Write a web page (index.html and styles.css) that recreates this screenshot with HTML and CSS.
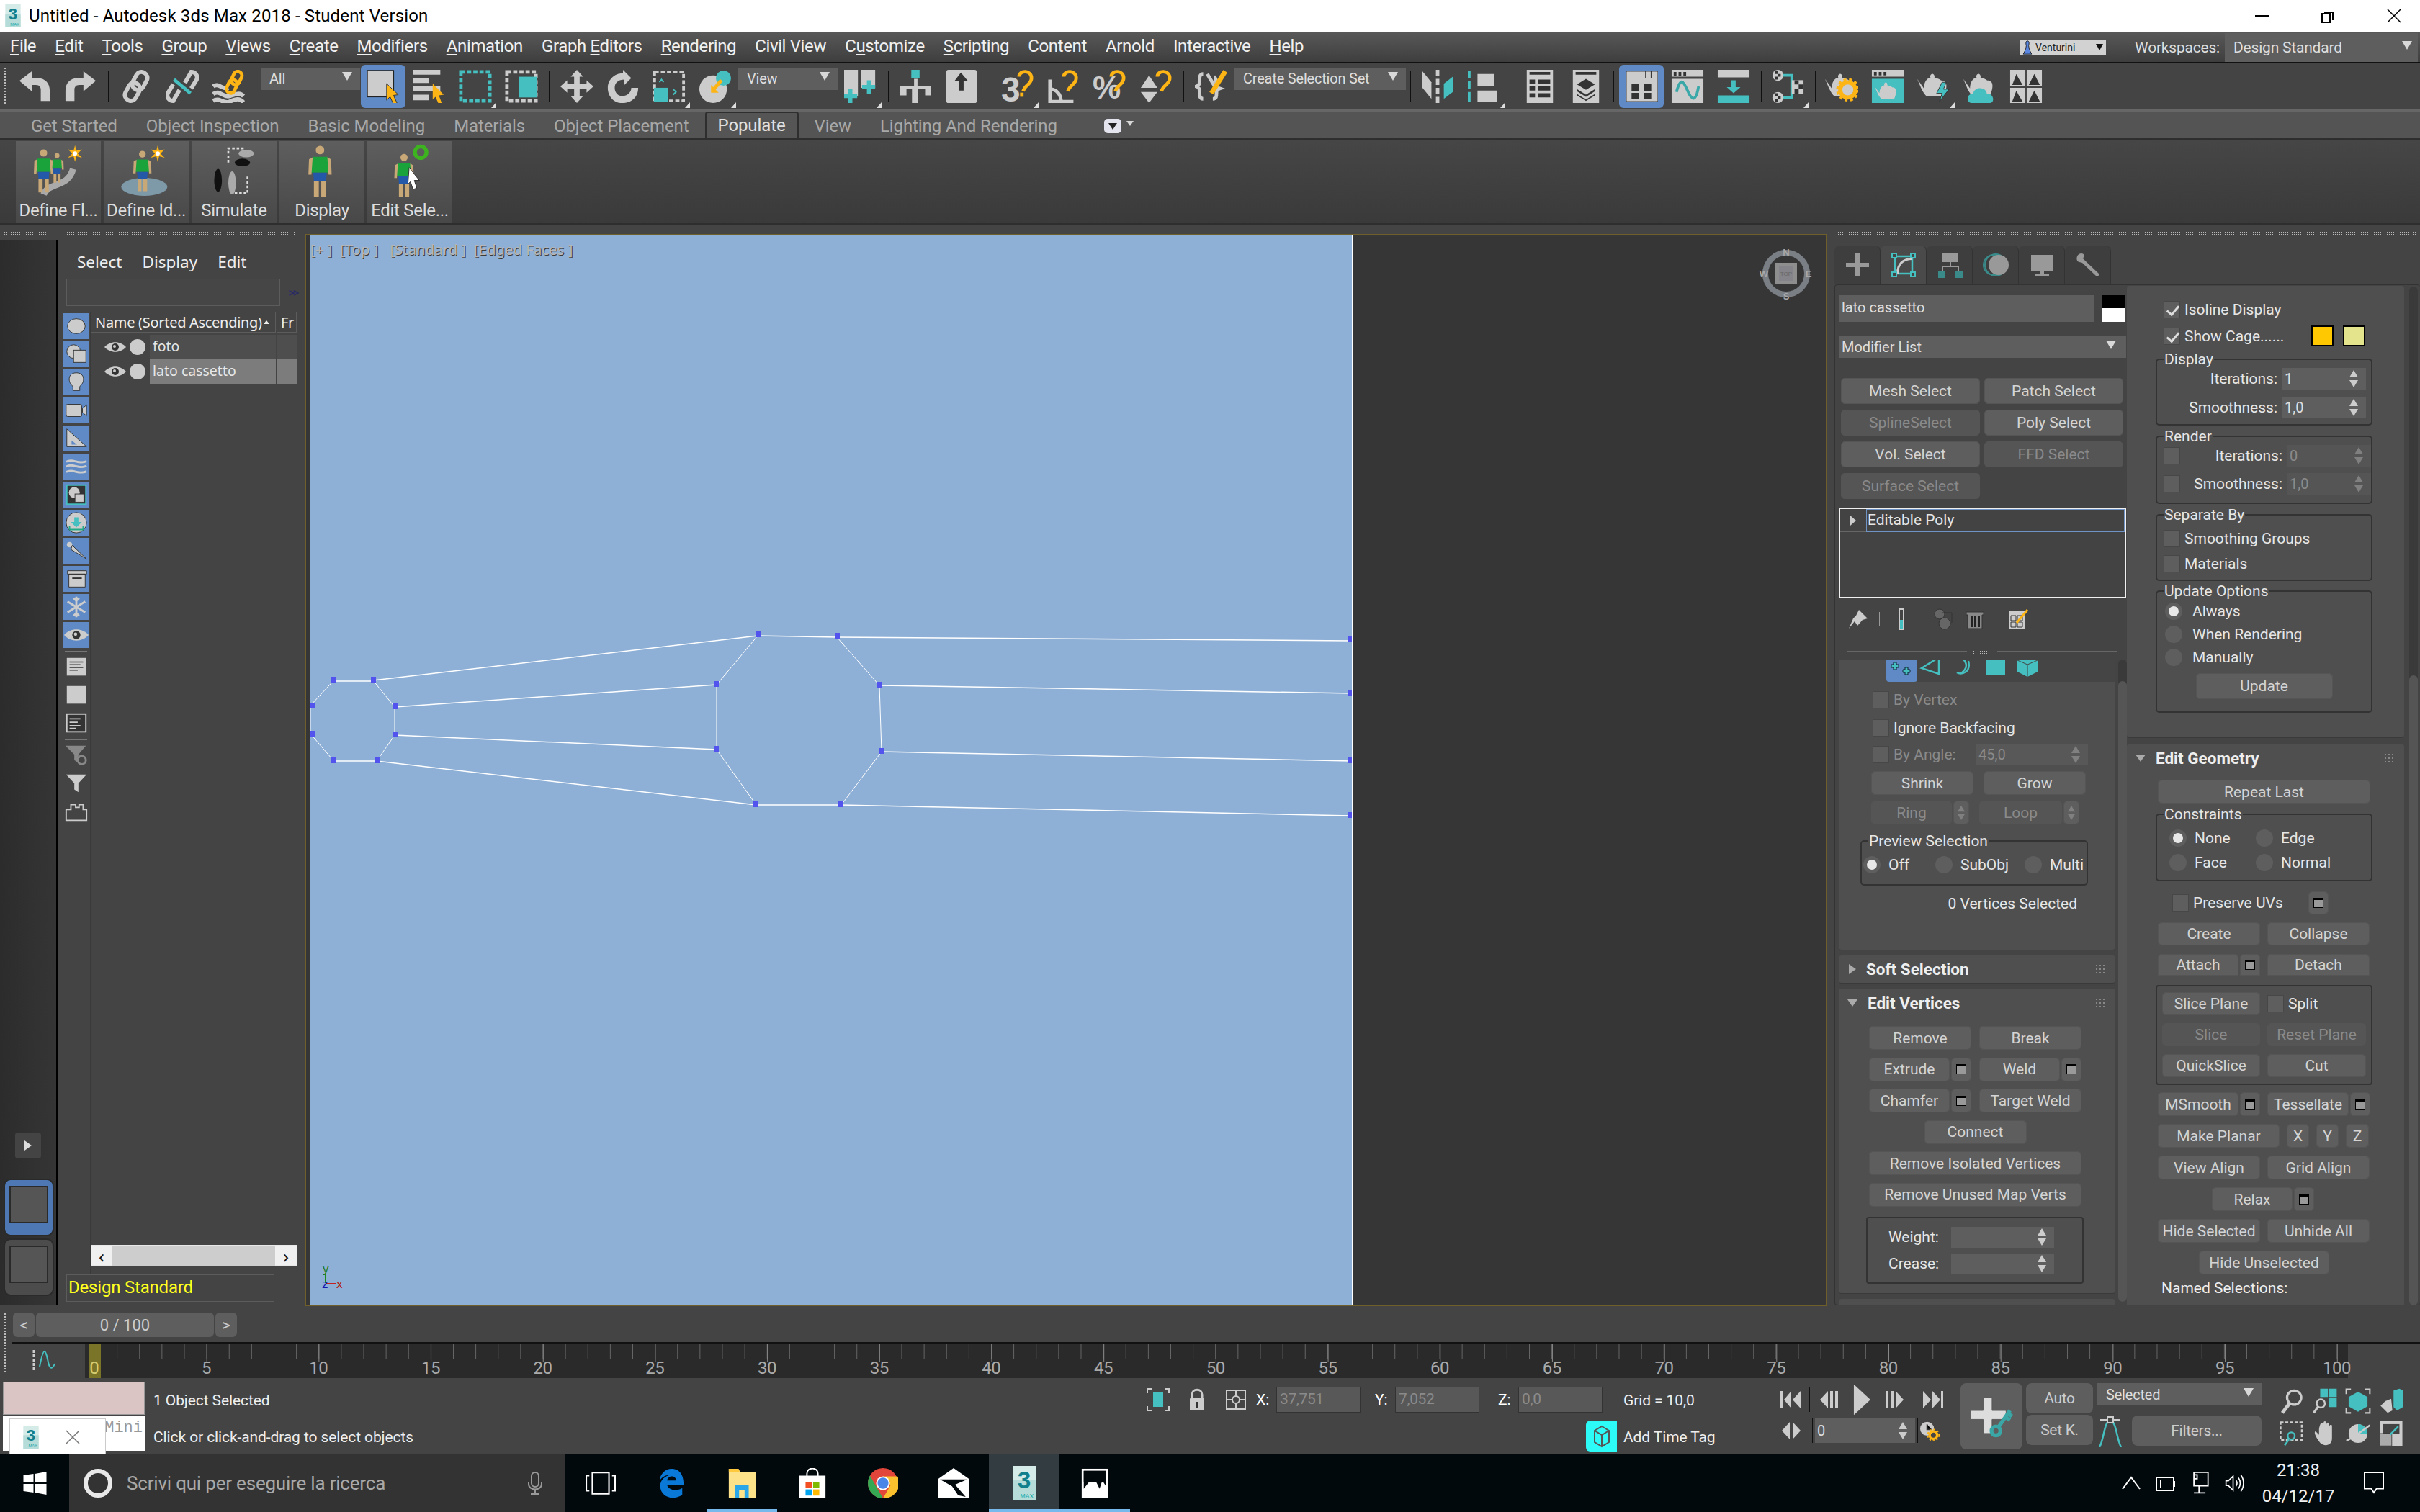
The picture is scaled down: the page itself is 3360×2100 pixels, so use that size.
FILE: index.html
```html
<!DOCTYPE html>
<html lang="en">
<head>
<meta charset="utf-8">
<title>Untitled - Autodesk 3ds Max 2018 - Student Version</title>
<link rel="stylesheet" href="styles.css">
</head>
<body>
<svg class="defs" width="0" height="0">
  <defs>
    <symbol id="maxlogo" viewBox="0 0 48 72">
      <rect width="48" height="72" fill="#d5ebe8"/><rect y="30" width="48" height="42" fill="#b5dcd8"/>
      <text x="24" y="47" text-anchor="middle" font-family="Liberation Sans" font-weight="700" font-size="50" fill="#12808c">3</text>
      <text x="30" y="67" text-anchor="middle" font-family="Liberation Sans" font-size="13" fill="#21a8a8">MAX</text>
    </symbol>
    <symbol id="i-undo" viewBox="0 0 48 48"><path fill="#ccc" d="M2 16 20 2v10h8c12 0 18 8 18 18v15H33V29c0-4-2-7-7-7h-6v9z"/></symbol>
    <symbol id="i-redo" viewBox="0 0 48 48"><path fill="#ccc" d="M46 16 28 2v10h-8C8 12 2 20 2 30v15h13V29c0-4 2-7 7-7h6v9z"/></symbol>
    <symbol id="i-link" viewBox="0 0 48 48"><g fill="none" stroke="#ccc" stroke-width="6"><rect x="21" y="3" width="17" height="27" rx="8" transform="rotate(28 30 16)"/><rect x="10" y="18" width="17" height="27" rx="8" transform="rotate(28 18 32)"/></g></symbol>
    <symbol id="i-unlink" viewBox="0 0 48 48"><g fill="none" stroke="#ccc" stroke-width="6"><path d="M28 19 37 3c6 0 10 5 8 11l-8 13"/><path d="M20 29 11 45C5 45 1 40 3 34l8-13"/></g><path stroke="#45bfbf" stroke-width="5" d="M12 14 36 34"/></symbol>
    <symbol id="i-bind" viewBox="0 0 48 48"><g fill="none" stroke="#ccc" stroke-width="6"><path d="M2 24c8-6 14 6 22 2"/><path d="M2 35c10-7 14 6 24 3s14-6 20 0"/><path d="M2 45c10-6 14 5 24 1s14-5 20 1"/></g><g fill="none" stroke="#fdb415" stroke-width="5"><rect x="30" y="2" width="12" height="20" rx="6" transform="rotate(25 36 12)"/><rect x="23" y="14" width="12" height="20" rx="6" transform="rotate(25 29 24)"/></g></symbol>
    <symbol id="i-sel" viewBox="0 0 48 48"><rect x="1" y="1" width="38" height="38" fill="#ccc" stroke="#222" stroke-width="1.5"/><path fill="#fdb415" stroke="#333" d="M29 20 46 36 39 37 44 48 39 50 34 39 29 44z"/></symbol>
    <symbol id="i-selname" viewBox="0 0 48 48"><path fill="#ccc" d="M0 0h40v7H0zM0 12h24v7H0zM0 24h40v7H0zM0 36h24v8H0z"/><path fill="#fdb415" d="M29 20 45 36 38 37 42 48 37 48 33 39 29 43z"/></symbol>
    <symbol id="i-rect" viewBox="0 0 48 48"><rect x="3" y="3" width="42" height="42" fill="none" stroke="#45bfbf" stroke-width="5" stroke-dasharray="6 3"/></symbol>
    <symbol id="i-window" viewBox="0 0 48 48"><rect x="3" y="3" width="42" height="42" fill="none" stroke="#ccc" stroke-width="5" stroke-dasharray="6 3"/><rect x="20" y="10" width="26" height="30" fill="#45bfbf"/></symbol>
    <symbol id="i-move" viewBox="0 0 48 48"><path fill="#ccc" d="M24 0 33 10H28V20H38V15L48 24 38 33V28H28V38H33L24 48 15 38H20V28H10V33L0 24 10 15V20H20V10H15z"/></symbol>
    <symbol id="i-rotate" viewBox="0 0 48 48"><path fill="#ccc" d="M24 0 36 12 26 22V14C18 14 12 18 12 26s6 12 11 12 13-4 13-12h10c0 14-10 22-23 22S2 38 2 26 12 5 24 5z"/></symbol>
    <symbol id="i-scale" viewBox="0 0 48 48"><rect x="3" y="3" width="42" height="42" fill="none" stroke="#ccc" stroke-width="4" stroke-dasharray="6 3"/><rect x="2" y="26" width="20" height="20" fill="#45bfbf"/><path fill="none" stroke="#45bfbf" stroke-width="2" d="M10 18l3-4 3 4M30 28l4 4-4 4"/></symbol>
    <symbol id="i-place" viewBox="0 0 48 48"><ellipse cx="21" cy="28" rx="20" ry="20" fill="#ccc"/><circle cx="36" cy="12" r="11" fill="#45bfbf"/><path stroke="#fdb415" stroke-width="5" d="M33 15 22 28"/><path fill="#fdb415" d="M18 22v11h11z"/></symbol>
    <symbol id="i-addin" viewBox="0 0 48 48"><path fill="#ccc" d="M0 0h20v38H0zM25 0h20v26H25z"/><path fill="#45bfbf" d="M6 28h6v7h7v6h-7v7H6v-7H-1v-6h7zM33 15h6v7h6v6h-6v7h-6v-7h-7v-6h7z"/></symbol>
    <symbol id="i-manip" viewBox="0 0 48 48"><path fill="#45bfbf" d="M17 0h12v12H17z"/><path fill="#ccc" d="M21 13h5v10h19v14H37v-9H27v20H18V28H10v9H1V23h20z"/></symbol>
    <symbol id="i-kbd" viewBox="0 0 48 48"><rect x="1" y="0" width="44" height="48" rx="3" fill="#ccc"/><path fill="#333" d="M22 4l10 12h-6v14h-7V16h-6z"/></symbol>
    <symbol id="i-s3" viewBox="0 0 48 48"><text x="0" y="46" font-family="Liberation Sans" font-weight="700" font-size="50" fill="#ccc">3</text><path fill="none" stroke="#fdb415" stroke-width="5" d="M26 10c0-10 18-10 18 2 0 9-10 10-12 19"/><path stroke="#fdb415" stroke-width="5" d="M30 33v6"/></symbol>
    <symbol id="i-ang" viewBox="0 0 48 48"><path fill="none" stroke="#ccc" stroke-width="5" d="M4 14V46H38M4 28C14 28 20 36 20 46"/><path fill="none" stroke="#fdb415" stroke-width="5" d="M24 10c0-10 18-10 18 2 0 9-10 10-12 19"/></symbol>
    <symbol id="i-pct" viewBox="0 0 48 48"><text x="-1" y="42" font-family="Liberation Sans" font-weight="700" font-size="46" fill="#ccc">%</text><path fill="none" stroke="#fdb415" stroke-width="5" d="M26 10c0-10 18-10 18 2 0 9-10 10-12 19"/></symbol>
    <symbol id="i-spin" viewBox="0 0 48 48"><path fill="#ccc" d="M14 8 26 26H2zM2 32H26L14 48z"/><path fill="none" stroke="#fdb415" stroke-width="5" d="M26 10c0-10 18-10 18 2 0 9-10 10-12 19"/></symbol>
    <symbol id="i-editsel" viewBox="0 0 48 48"><g fill="none" stroke="#ccc" stroke-width="5"><path d="M12 6C4 6 8 18 6 21c-1 2-4 3-4 3s3 1 4 3c2 3-2 15 6 15M28 10c4 2 2 12 4 14 1 2 4 3 4 3s-3 1-4 3c-2 3 2 12-6 12"/></g><path stroke="#ccc" stroke-width="5" d="M18 6 30 26"/><path stroke="#fdb415" stroke-width="7" d="M44 2 24 34"/></symbol>
    <symbol id="i-mirror" viewBox="0 0 48 48"><path fill="#ccc" d="M1 2 14 18V42L1 26z"/><path stroke="#ccc" stroke-width="5" stroke-dasharray="9 4" d="M23 0V48"/><path fill="#45bfbf" d="M45 10V32L32 42V20z"/></symbol>
    <symbol id="i-align" viewBox="0 0 48 48"><path fill="#45bfbf" d="M0 2h4v10H0zM0 16h4v12H0zM0 32h4v14H0z"/><path fill="#ccc" d="M14 6H38V24H14zM14 30H42V46H14z"/></symbol>
    <symbol id="i-layer" viewBox="0 0 48 48"><rect x="5" width="38" height="48" fill="#ccc"/><path fill="#333" d="M9 3h30v4H9zM9 14h8v6H9zM21 14h18v6H21zM9 24h8v6H9zM21 24h18v6H21zM9 34h8v6H9zM21 34h18v6H21z"/></symbol>
    <symbol id="i-stack" viewBox="0 0 48 48"><rect x="5" width="38" height="48" fill="#ccc"/><path fill="#333" d="M9 3h30v4H9zM24 13 37 21 24 29 11 21zM11 28 24 36 37 28 37 31 24 39 11 31zM11 35l13 8 13-8v2L24 45 11 37z"/></symbol>
    <symbol id="i-grid" viewBox="0 0 48 48"><path fill="#ccc" stroke="#222" d="M2 2h46v44H2z"/><path fill="none" stroke="#222" d="M30 2v10h18M38 2v10"/><path fill="#333" d="M16 20h11v11H16zM36 20h11v11H36zM16 34h11v10H16zM36 34h11v10H36z" transform="translate(-5 2) scale(.92)"/></symbol>
    <symbol id="i-curve" viewBox="0 0 48 48"><path fill="#ccc" d="M1 0h46v10H1zM1 13h46v35H1z"/><path fill="#333" d="M4 3h4v6H4zM11 3h4v6h-4zM18 3h4v6h-4z"/><path fill="none" stroke="#3aa8a8" stroke-width="4" d="M8 32c6-22 10-16 16-2s12 18 16-6"/></symbol>
    <symbol id="i-scene" viewBox="0 0 48 48"><path fill="#ccc" d="M1 0h46v11H1z"/><path fill="#45bfbf" d="M1 37h46v11H1zM20 15h7v10h7L24 34 14 25h6z"/></symbol>
    <symbol id="i-schem" viewBox="0 0 48 48"><path fill="none" stroke="#45bfbf" stroke-width="4" d="M16 8H30V40H16"/><g fill="#ccc"><ellipse cx="10" cy="8" rx="8" ry="8"/><ellipse cx="10" cy="40" rx="8" ry="8"/><rect x="30" y="15" width="17" height="20"/></g><g fill="#333"><path d="M6 2h4v4H6zM10 6h4v4h-4zM6 10h4v4H6zM6 34h4v4H6zM10 38h4v4h-4zM6 42h4v4H6zM34 15h6v6h-6zM40 21h7v7h-7zM34 28h6v7h-6z"/></g></symbol>
    <symbol id="teapot" viewBox="0 0 48 48"><path fill="#ccc" d="M0 14 10 28c0-8 4-16 10-16 0 0-2-5 3-6 4 1 3 6 3 6 5 1 8 2 10 4 10 0 10 10 4 24H14C10 36 8 32 6 28z"/></symbol>
    <symbol id="i-rsetup" viewBox="0 0 48 48"><use href="#teapot" width="46" height="46"/><circle cx="33" cy="29" r="11" fill="none" stroke="#fdb415" stroke-width="6"/><circle cx="33" cy="29" r="15" fill="none" stroke="#fdb415" stroke-width="4" stroke-dasharray="4 4"/></symbol>
    <symbol id="i-rframe" viewBox="0 0 48 48"><path fill="#ccc" d="M1 0h46v10H1z"/><path fill="#333" d="M4 3h4v5H4zM11 3h4v5h-4zM18 3h4v5h-4z"/><rect x="1" y="13" width="46" height="35" fill="#45bfbf"/><use href="#teapot" x="4" y="14" width="36" height="34"/></symbol>
    <symbol id="i-rprod" viewBox="0 0 48 48"><use href="#teapot" width="46" height="46"/><path fill="#45bfbf" stroke="#333" d="M36 18 28 34H36L32 46 46 28H38L42 18z"/></symbol>
    <symbol id="i-cloud" viewBox="0 0 48 48"><use href="#teapot" width="46" height="46"/><path fill="#45bfbf" d="M12 48c-8 0-8-14 2-13 2-12 20-10 20 0 10-2 12 13 5 13z"/></symbol>
    <symbol id="i-gallery" viewBox="0 0 48 48"><path fill="#ccc" d="M1 0H23V24H1zM25 0H47V24H25zM1 26H23V48H1zM25 26H47V48H25z"/><path fill="#333" d="M4 22 10 6 13 12 19 22zM28 22 36 6 44 22zM4 46 10 30 13 36 19 46zM28 46 36 30 44 46z"/></symbol>
    <symbol id="person" viewBox="0 0 40 90"><circle cx="20" cy="9" r="7" fill="#c9a878"/><path fill="#1aa33a" d="M8 20h24l3 26H5z"/><path fill="#2458a8" d="M9 46h22l-1 14H10z"/><path fill="#c9a878" d="M10 60h8v26h-8zM22 60h8v26h-8zM2 24l6-3-2 28H1zM38 24l-6-3 2 28h5z"/></symbol>
    <symbol id="star" viewBox="0 0 24 24"><path fill="#fdb415" d="M12 0l2 8 8-2-6 6 6 6-8-2-2 8-2-8-8 2 6-6-6-6 8 2z"/><circle cx="12" cy="12" r="3" fill="#fff"/></symbol>
    <symbol id="eye" viewBox="0 0 30 16"><path fill="#ccc" d="M0 8C8-1 22-1 30 8 22 17 8 17 0 8z"/><circle cx="15" cy="8" r="5" fill="#333"/><circle cx="14" cy="7" r="2" fill="#ccc"/></symbol>
    <symbol id="updown" viewBox="0 0 12 24"><path fill="#ccc" d="M6 0 12 10H0zM0 14H12L6 24z"/></symbol>
    <symbol id="updowndim" viewBox="0 0 12 24"><path fill="#808080" d="M6 0 12 10H0zM0 14H12L6 24z"/></symbol>
    <symbol id="dotgrip" viewBox="0 0 12 12"><path fill="#888" d="M0 0h2v2H0zM5 0h2v2H5zM10 0h2v2h-2zM0 5h2v2H0zM5 5h2v2H5zM10 5h2v2h-2zM0 10h2v2H0zM5 10h2v2H5zM10 10h2v2h-2z"/></symbol>
  </defs>
</svg>

<header class="titlebar">
  <svg class="tlogo"><use href="#maxlogo"/></svg>
  <span class="ttext">Untitled - Autodesk 3ds Max 2018 - Student Version</span>
  <div class="winbtns">
    <svg class="wb" viewBox="0 0 20 20"><path stroke="#000" stroke-width="2" d="M1 10H20"/></svg>
    <svg class="wb" viewBox="0 0 20 20"><path fill="none" stroke="#000" stroke-width="2" d="M5 5h12V16M2 7h11v12H2z"/></svg>
    <svg class="wb" viewBox="0 0 20 20"><path stroke="#000" stroke-width="1.5" d="M1 1 19 19M19 1 1 19"/></svg>
  </div>
</header>

<nav class="menubar">
  <span><u>F</u>ile</span><span><u>E</u>dit</span><span><u>T</u>ools</span><span><u>G</u>roup</span><span><u>V</u>iews</span><span><u>C</u>reate</span><span><u>M</u>odifiers</span><span><u>A</u>nimation</span><span>Graph <u>E</u>ditors</span><span><u>R</u>endering</span><span>Civil View</span><span>C<u>u</u>stomize</span><span><u>S</u>cripting</span><span>Content</span><span>Arnold</span><span>Interactive</span><span><u>H</u>elp</span>
  <div class="menuright">
    <div class="user"><svg class="usericon" viewBox="0 0 16 24"><path fill="#5a86e0" stroke="#111" d="M8 1c3 0 3 4 2 8l1 6 4 8H1l4-8 1-6C5 5 5 1 8 1z"/></svg><span>Venturini</span><i class="tri-dark"></i></div>
    <span class="wslabel">Workspaces:</span>
    <div class="wsdrop"><span>Design Standard</span><i class="tri"></i></div>
  </div>
</nav>

<section class="toolbar">
  <div class="vgrip"></div>
  <div class="ti"><svg><use href="#i-undo"/></svg></div>
  <div class="ti"><svg><use href="#i-redo"/></svg></div>
  <div class="sep"></div>
  <div class="ti"><svg><use href="#i-link"/></svg></div>
  <div class="ti"><svg><use href="#i-unlink"/></svg></div>
  <div class="ti"><svg><use href="#i-bind"/></svg></div>
  <div class="sep"></div>
  <div class="tdrop w138"><span>All</span><i class="tri"></i></div>
  <div class="ti on"><svg><use href="#i-sel"/></svg></div>
  <div class="ti"><svg><use href="#i-selname"/></svg></div>
  <div class="ti fly"><svg><use href="#i-rect"/></svg></div>
  <div class="ti"><svg><use href="#i-window"/></svg></div>
  <div class="sep"></div>
  <div class="ti"><svg><use href="#i-move"/></svg></div>
  <div class="ti"><svg><use href="#i-rotate"/></svg></div>
  <div class="ti fly"><svg><use href="#i-scale"/></svg></div>
  <div class="ti fly"><svg><use href="#i-place"/></svg></div>
  <div class="tdrop w138"><span>View</span><i class="tri"></i></div>
  <div class="ti fly"><svg><use href="#i-addin"/></svg></div>
  <div class="sep"></div>
  <div class="ti"><svg><use href="#i-manip"/></svg></div>
  <div class="ti"><svg><use href="#i-kbd"/></svg></div>
  <div class="sep"></div>
  <div class="ti fly"><svg><use href="#i-s3"/></svg></div>
  <div class="ti"><svg><use href="#i-ang"/></svg></div>
  <div class="ti"><svg><use href="#i-pct"/></svg></div>
  <div class="ti"><svg><use href="#i-spin"/></svg></div>
  <div class="sep"></div>
  <div class="ti"><svg><use href="#i-editsel"/></svg></div>
  <div class="tdrop w238"><span>Create Selection Set</span><i class="tri"></i></div>
  <div class="sep"></div>
  <div class="ti"><svg><use href="#i-mirror"/></svg></div>
  <div class="ti fly"><svg><use href="#i-align"/></svg></div>
  <div class="sep"></div>
  <div class="ti"><svg><use href="#i-layer"/></svg></div>
  <div class="ti"><svg><use href="#i-stack"/></svg></div>
  <div class="sep"></div>
  <div class="ti on"><svg><use href="#i-grid"/></svg></div>
  <div class="ti"><svg><use href="#i-curve"/></svg></div>
  <div class="ti"><svg><use href="#i-scene"/></svg></div>
  <div class="sep nar"></div>
  <div class="ti fly"><svg><use href="#i-schem"/></svg></div>
  <div class="sep nar"></div>
  <div class="ti"><svg><use href="#i-rsetup"/></svg></div>
  <div class="ti"><svg><use href="#i-rframe"/></svg></div>
  <div class="ti fly"><svg><use href="#i-rprod"/></svg></div>
  <div class="ti"><svg><use href="#i-cloud"/></svg></div>
  <div class="ti"><svg><use href="#i-gallery"/></svg></div>
</section>

<section class="tabs">
  <span class="tab">Get Started</span><span class="tab">Object Inspection</span><span class="tab">Basic Modeling</span><span class="tab">Materials</span><span class="tab">Object Placement</span><span class="tab active">Populate</span><span class="tab">View</span><span class="tab">Lighting And Rendering</span>
  <div class="tabmenu"><svg viewBox="0 0 26 22"><rect x="1" y="1" width="24" height="20" rx="5" fill="#e4e4ee"/><path fill="#222" d="M7 7H19L13 16z"/></svg><i class="tri small"></i></div>
</section>

<section class="ribbon">
  <div class="rb"><svg class="rbi" viewBox="0 0 90 90"><path fill="none" stroke="#aaa" stroke-width="10" d="M22 80C30 60 60 70 68 40"/><use href="#person" x="6" y="8" width="32" height="72"/><use href="#person" x="32" y="14" width="22" height="50"/><use href="#star" x="58" y="2" width="26" height="28"/></svg><span>Define Fl...</span></div>
  <div class="rb"><svg class="rbi" viewBox="0 0 90 90"><ellipse cx="42" cy="68" rx="36" ry="14" fill="#7e9aa8"/><use href="#person" x="24" y="10" width="30" height="68"/><use href="#star" x="50" y="2" width="26" height="28"/></svg><span>Define Id...</span></div>
  <div class="rb"><svg class="rbi" viewBox="0 0 90 90"><ellipse cx="20" cy="58" rx="6" ry="18" fill="#111"/><ellipse cx="42" cy="62" rx="6" ry="18" fill="#aaa"/><ellipse cx="58" cy="30" rx="12" ry="6" fill="#111"/><ellipse cx="64" cy="16" rx="12" ry="6" fill="#aaa"/><path fill="none" stroke="#ddd" stroke-width="3" stroke-dasharray="4 3" d="M36 30V8H60M46 78H66V50"/></svg><span>Simulate</span></div>
  <div class="rb"><svg class="rbi" viewBox="0 0 90 90"><use href="#person" x="20" y="2" width="44" height="86"/></svg><span>Display</span></div>
  <div class="rb"><svg class="rbi" viewBox="0 0 90 90"><use href="#person" x="20" y="14" width="32" height="74"/><circle cx="62" cy="14" r="9" fill="none" stroke="#3db320" stroke-width="6"/><path fill="#fff" stroke="#222" d="M44 38 60 58 52 58 56 70 50 72 46 60 42 64z"/></svg><span>Edit Sele...</span></div>
</section>

<main class="work">
  <aside class="leftcol">
    <div class="gripline"><div class="grip w70"></div><div class="grip w318"></div></div>
    <div class="leftbody">
      <div class="strip">
        <div class="playbtn"><svg viewBox="0 0 12 16"><path fill="#ddd" d="M1 1 11 8 1 15z"/></svg></div>
        <div class="vpbtn vpon"><i></i></div>
        <div class="vpbtn"><i></i></div>
      </div>
      <div class="explorer">
        <div class="exmenu"><span>Select</span><span>Display</span><span>Edit</span></div>
        <div class="exsearch"><div class="exfield"></div><span class="chev">&gt;&gt;</span></div>
        <div class="exbody">
          <div class="extools">
            <div class="et b"><svg viewBox="0 0 36 36"><ellipse cx="18" cy="18" rx="13" ry="11" fill="#ccc" stroke="#333"/></svg></div>
            <div class="et b"><svg viewBox="0 0 36 36"><circle cx="14" cy="14" r="10" fill="#ccc" stroke="#333"/><rect x="14" y="12" width="18" height="18" fill="#ccc" stroke="#333"/></svg></div>
            <div class="et b"><svg viewBox="0 0 36 36"><path fill="#ccc" stroke="#333" d="M18 4c13 0 13 14 5 20v6H13v-6C5 18 5 4 18 4z"/></svg></div>
            <div class="et b"><svg viewBox="0 0 36 36"><rect x="3" y="9" width="23" height="18" rx="2" fill="#ccc" stroke="#333"/><path fill="#ccc" stroke="#333" d="M27 15 33 10V26L27 21z"/></svg></div>
            <div class="et b"><svg viewBox="0 0 36 36"><path fill="#ccc" stroke="#333" d="M4 4 33 30H4z"/><path fill="#5f8ac5" d="M11 21 19 27H11z"/></svg></div>
            <div class="et b"><svg viewBox="0 0 36 36"><path fill="none" stroke="#ccc" stroke-width="3" d="M3 11c10-6 18 5 30-1M3 18c10-6 18 5 30-1M3 26c10-6 18 5 30-1"/></svg></div>
            <div class="et b"><svg viewBox="0 0 36 36"><rect x="4" y="4" width="28" height="28" fill="#333" stroke="#45bfbf" stroke-width="2"/><circle cx="15" cy="15" r="8" fill="#ccc"/><rect x="16" y="17" width="13" height="12" fill="#ccc" stroke="#333"/></svg></div>
            <div class="et b"><svg viewBox="0 0 36 36"><circle cx="18" cy="18" r="15" fill="#ccc" stroke="#333"/><path fill="#45bfbf" d="M15 10h6v7h5l-8 8-8-8h5z"/><path fill="none" stroke="#2a8" stroke-width="2" d="M8 23v5H28v-5"/></svg></div>
            <div class="et b"><svg viewBox="0 0 36 36"><circle cx="8" cy="9" r="4" fill="#ccc"/><path fill="#ccc" stroke="#333" d="M12 10 33 30 10 16z"/></svg></div>
            <div class="et b"><svg viewBox="0 0 36 36"><path fill="#ccc" stroke="#333" d="M5 6H33V11H5zM7 11H31V30H7z"/><path stroke="#333" stroke-width="2" d="M12 17H26"/></svg></div>
            <div class="et b"><svg viewBox="0 0 36 36"><path stroke="#ccc" stroke-width="3" d="M18 3V33M5 10 31 26M31 10 5 26M14 5l4 4 4-4M14 31l4-4 4 4"/></svg></div>
            <div class="et b"><svg viewBox="0 0 36 36"><use href="#eye"/></svg></div>
            <div class="ethr"></div>
            <div class="et"><svg viewBox="0 0 36 36"><rect x="4" y="4" width="28" height="26" fill="#ccc"/><path stroke="#333" stroke-width="1.5" d="M8 10H28M8 14H24M8 18H28M8 22H20"/></svg></div>
            <div class="et"><svg viewBox="0 0 36 36"><rect x="4" y="4" width="28" height="26" fill="#ccc"/></svg></div>
            <div class="et"><svg viewBox="0 0 36 36"><rect x="4" y="4" width="28" height="26" fill="#333" stroke="#ccc" stroke-width="2"/><path stroke="#ccc" stroke-width="2" d="M8 11H24M8 16H20M8 21H24M8 25H18"/></svg></div>
            <div class="ethr"></div>
            <div class="et"><svg viewBox="0 0 36 36"><path fill="#888" d="M2 3H32L21 16V28L15 24V16z"/><circle cx="26" cy="24" r="6" fill="none" stroke="#888" stroke-width="3"/></svg></div>
            <div class="et"><svg viewBox="0 0 36 36"><path fill="#ccc" d="M3 4H33L21 17V30L15 26V17z"/></svg></div>
            <div class="et"><svg viewBox="0 0 36 36"><path fill="none" stroke="#ccc" stroke-width="2" d="M3 14H10V7H17V11H22V7H28V14H33V30H3z"/></svg></div>
          </div>
          <div class="exlist">
            <div class="exhead"><span class="excol1">Name (Sorted Ascending)<i class="tri-up"></i></span><span class="excol2">Fr</span></div>
            <div class="exrow"><svg class="eye"><use href="#eye"/></svg><i class="dot"></i><span class="exname">foto</span><span class="excell"></span></div>
            <div class="exrow sel"><svg class="eye"><use href="#eye"/></svg><i class="dot"></i><span class="exname">lato cassetto</span><span class="excell"></span></div>
            <div class="exspacer"></div>
            <div class="exscroll"><i class="sarrow">&#8249;</i><i class="sthumb"></i><i class="sarrow">&#8250;</i></div>
          </div>
        </div>
        <div class="exfoot"><div class="wsbox">Design Standard</div></div>
      </div>
    </div>
  </aside>

  <section class="viewframe">
    <svg class="scene" viewBox="430 327 1446 1485" preserveAspectRatio="none">
      <g fill="none" stroke="#fff" stroke-width="1">
        <path stroke-width="1.5" d="M461.5 946H517M462.5 1057H522M1051 883 1161 885 1875 890M1049 1118H1167L1875 1133M517 945 1051 883M522 1057 1049 1118M547 982 994 951M547 1021 994 1041M1220 952 1875 963M1223 1044 1875 1057"/>
        <path d="M461.5 946 430 980V1019L462.5 1057M517 945 547 982V1021L522 1057M1051 883 994 951V1041L1049 1118M1161 885 1220 952 1223 1044 1167 1118"/>
      </g>
      <g fill="#5353ee">
        <rect x="458" y="940" width="7" height="8"/><rect x="514" y="940" width="7" height="8"/><rect x="544" y="977" width="7" height="8"/><rect x="544" y="1016" width="7" height="8"/><rect x="519" y="1052" width="7" height="8"/><rect x="459" y="1052" width="7" height="8"/><rect x="430" y="1015" width="6" height="8"/><rect x="430" y="976" width="6" height="8"/>
        <rect x="1048" y="877" width="7" height="8"/><rect x="1158" y="879" width="7" height="8"/><rect x="1217" y="947" width="7" height="8"/><rect x="1220" y="1039" width="7" height="8"/><rect x="1163" y="1113" width="7" height="8"/><rect x="1045" y="1113" width="7" height="8"/><rect x="990" y="1036" width="7" height="8"/><rect x="990" y="946" width="7" height="8"/>
        <rect x="1870" y="884" width="6" height="8"/><rect x="1870" y="958" width="6" height="8"/><rect x="1870" y="1052" width="6" height="8"/><rect x="1870" y="1128" width="6" height="8"/>
      </g>
      <path stroke="#1c8a1c" stroke-width="2" d="M451 1770V1782"/>
      <path stroke="#c82020" stroke-width="2" d="M451 1783H466"/>
      <text x="447" y="1768" font-family="Liberation Sans" font-size="17" fill="#1c7a1c">y</text>
      <text x="446" y="1789" font-family="Liberation Sans" font-size="17" fill="#1818b0">z</text>
      <text x="466" y="1789" font-family="Liberation Sans" font-size="17" fill="#b01818">x</text>
    </svg>
    <div class="vplabel">[+ ]  [Top ]   [Standard ]  [Edged Faces ]</div>
    <div class="vpdark">
      <svg class="viewcube" viewBox="0 0 80 80">
        <circle cx="40" cy="40" r="29" fill="none" stroke="#7a7f85" stroke-width="8"/>
        <rect x="25" y="25" width="30" height="30" fill="#8e8e8e"/><rect x="30" y="30" width="20" height="20" fill="#84848a"/>
        <text x="40" y="43" text-anchor="middle" font-family="Liberation Sans" font-size="8" fill="#666">TOP</text>
        <g font-family="Liberation Sans" font-weight="700" font-size="13" fill="#a8a8a8" text-anchor="middle"><text x="40" y="15">N</text><text x="40" y="76">S</text><text x="9" y="45">W</text><text x="71" y="45">E</text></g>
      </svg>
    </div>
  </section>

  <aside class="cmd">
    <div class="gripline"><div class="grip w804"></div></div>
    <div class="cmdtabs">
      <div class="ct"><svg viewBox="0 0 36 36"><path fill="#999" d="M15 2h6v13h13v6H21v13h-6V21H2v-6h13z"/></svg></div>
      <div class="ct act"><svg viewBox="0 0 36 36"><path fill="none" stroke="#45bfbf" stroke-width="2.5" d="M6 6H30V30H6z"/><path fill="#ccc" d="M8 30C8 16 16 8 30 8v3C18 11 11 18 11 30z"/><path fill="#444" stroke="#45bfbf" stroke-width="2" d="M2 2h6v6H2zM28 2h6v6h-6zM2 28h6v6H2zM28 28h6v6h-6z"/></svg></div>
      <div class="ct"><svg viewBox="0 0 36 36"><path fill="#999" d="M8 2H30V14H8z"/><path fill="none" stroke="#999" stroke-width="2" d="M19 14V20M8 28V20H30V28"/><path fill="#3a8a8a" d="M2 26H12V36H2zM26 26H36V36H26z"/></svg></div>
      <div class="ct"><svg viewBox="0 0 36 36"><circle cx="15" cy="18" r="14" fill="none" stroke="#3a8a8a" stroke-width="2"/><circle cx="18" cy="18" r="15" fill="none" stroke="#3a8a8a" stroke-width="2"/><circle cx="22" cy="18" r="14" fill="#999"/></svg></div>
      <div class="ct"><svg viewBox="0 0 36 36"><path fill="#999" d="M3 4H33V26H3zM15 27h6v4h7v3H8v-3h7z"/></svg></div>
      <div class="ct"><svg viewBox="0 0 36 36"><path fill="#999" d="M3 6C5 1 12 1 13 5l-2 4 3 3L33 30c1 3-2 5-4 3L10 15 6 14C2 13 2 9 3 6z"/></svg></div>
    </div>
    <div class="cmdbody">
      <div class="modcol">
        <div class="namerow"><div class="namefield">lato cassetto</div><div class="swatch"></div></div>
        <div class="modlist"><span>Modifier List</span><i class="tri"></i></div>
        <div class="modbtns">
          <div class="btn">Mesh Select</div><div class="btn">Patch Select</div>
          <div class="btn dis">SplineSelect</div><div class="btn">Poly Select</div>
          <div class="btn">Vol. Select</div><div class="btn dis">FFD Select</div>
          <div class="btn dis">Surface Select</div>
        </div>
        <div class="stack">
          <div class="stackrow"><i class="stackarrow"></i><span class="stackname">Editable Poly</span></div>
        </div>
        <div class="stacktools">
          <svg class="st" viewBox="0 0 30 30"><path fill="#ccc" d="M16 2 28 14 21 16 14 24 10 18 2 28 8 14 12 10z"/></svg><i class="stsep"></i>
          <svg class="st" viewBox="0 0 30 30"><path fill="none" stroke="#ccc" stroke-width="2" d="M12 1H20M13 1V29H19V1"/><rect x="14" y="16" width="4" height="12" fill="#45bfbf"/></svg><i class="stsep"></i>
          <svg class="st" viewBox="0 0 30 30"><circle cx="10" cy="8" r="7" fill="#666" stroke="#333"/><circle cx="17" cy="21" r="8" fill="#666" stroke="#333"/><path fill="none" stroke="#333" d="M14 6H27V20"/></svg>
          <svg class="st" viewBox="0 0 30 30"><path fill="#888" stroke="#333" d="M3 5H27V9H25V28H5V9H3z"/><path fill="#222" d="M9 11h3v15H9zM14 11h3v15h-3zM19 11h3v15h-3z"/></svg><i class="stsep"></i>
          <svg class="st" viewBox="0 0 30 30"><rect x="3" y="4" width="22" height="24" fill="#ccc"/><path fill="none" stroke="#333" d="M6 10h7v7H6zM15 10h7v7h-7zM6 19h7v7H6zM15 19h7v7h-7z"/><path stroke="#fdb415" stroke-width="3" d="M29 2 14 20"/></svg>
        </div>
        <div class="splitter"><i></i><b></b><i></i></div>
        <div class="rollscroll">
          <div class="rolls">
            <div class="roll r404">
              <div class="subobj">
                <div class="so on"><svg viewBox="0 0 40 30"><g fill="#45bfbf" stroke="#123"><path d="M8 10h4v3h3v4h-3v3H8v-3H5v-4h3z"/><path d="M24 17h4v3h3v4h-3v3h-4v-3h-3v-4h3z"/></g></svg></div>
                <div class="so"><svg viewBox="0 0 40 30"><path fill="none" stroke="#45bfbf" stroke-width="2.5" d="M4 18 28 3V26z"/></svg></div>
                <div class="so"><svg viewBox="0 0 40 30"><path fill="none" stroke="#45bfbf" stroke-width="2.5" d="M12 2c12 4 16 16 2 24M10 24c6 4 20 0 16-16"/></svg></div>
                <div class="so"><svg viewBox="0 0 40 30"><rect x="8" y="3" width="26" height="25" fill="#45bfbf"/></svg></div>
                <div class="so"><svg viewBox="0 0 40 30"><path fill="#45bfbf" d="M8 7 22 1 36 7V23L22 30 8 23z"/><path fill="none" stroke="#444" d="M8 7 22 13 36 7M22 13V30"/></svg></div>
              </div>
              <div class="ln pl47 mt13 dim"><i class="cb"></i><span>By Vertex</span></div>
              <div class="ln pl47 mt15"><i class="cb"></i><span>Ignore Backfacing</span></div>
              <div class="ln pl47 mt10 dim h29"><i class="cb"></i><span class="wlab">By Angle:</span><div class="spin w155"><span>45,0</span><svg class="ud"><use href="#updowndim"/></svg></div></div>
              <div class="row pl45 mt9 g14"><div class="btn w142">Shrink</div><div class="btn w142">Grow</div></div>
              <div class="row pl45 mt8 g14">
                <div class="pair g8"><div class="btn dis w112">Ring</div><div class="btn w22 sq"><svg class="ud"><use href="#updowndim"/></svg></div></div>
                <div class="pair g6"><div class="btn dis w115">Loop</div><div class="btn w22 sq"><svg class="ud"><use href="#updowndim"/></svg></div></div>
              </div>
              <fieldset class="grp gpv"><legend>Preview Selection</legend>
                <div class="radios"><label class="rd w100"><i class="ra on"></i>Off</label><label class="rd w124"><i class="ra"></i>SubObj</label><label class="rd"><i class="ra"></i>Multi</label></div>
              </fieldset>
              <div class="vsel">0 Vertices Selected</div>
            </div>
            <div class="roll head r39"><i class="arr-r"></i><b>Soft Selection</b><svg class="dg"><use href="#dotgrip"/></svg></div>
            <div class="roll r424">
              <div class="head h40"><i class="arr-d"></i><b>Edit Vertices</b><svg class="dg"><use href="#dotgrip"/></svg></div>
              <div class="evrows">
                <div class="row g11"><div class="btn w142">Remove</div><div class="btn w142">Break</div></div>
                <div class="row g11"><div class="pair"><div class="btn w112">Extrude</div><div class="btn w28 box"></div></div><div class="pair"><div class="btn w112">Weld</div><div class="btn w28 box"></div></div></div>
                <div class="row g11"><div class="pair"><div class="btn w112">Chamfer</div><div class="btn w28 box"></div></div><div class="btn w142">Target Weld</div></div>
                <div class="row center"><div class="btn w142">Connect</div></div>
                <div class="row"><div class="btn w295">Remove Isolated Vertices</div></div>
                <div class="row"><div class="btn w295">Remove Unused Map Verts</div></div>
              </div>
              <div class="wgroup">
                <div class="wrow"><span class="wname">Weight:</span><div class="spin w143"><svg class="ud"><use href="#updown"/></svg></div></div>
                <div class="wrow"><span class="wname">Crease:</span><div class="spin w143"><svg class="ud"><use href="#updown"/></svg></div></div>
              </div>
            </div>
            <div class="roll r20"></div>
          </div>
          <div class="scrollbar sb1"><i></i></div>
        </div>
      </div>

      <div class="geocol">
        <div class="geoinner">
          <div class="roll r628">
            <div class="ln pl51 mt21"><i class="cb ck"></i><span>Isoline Display</span></div>
            <div class="ln pl51 mt10"><i class="cb ck"></i><span class="w170">Show Cage......</span><i class="sw yel"></i><i class="sw pale"></i></div>
            <fieldset class="grp gd mt6"><legend>Display</legend>
              <div class="srow"><span class="slab">Iterations:</span><div class="spin w116"><span>1</span><svg class="ud"><use href="#updown"/></svg></div></div>
              <div class="srow"><span class="slab">Smoothness:</span><div class="spin w116"><span>1,0</span><svg class="ud"><use href="#updown"/></svg></div></div>
            </fieldset>
            <fieldset class="grp gr"><legend>Render</legend>
              <div class="srow tight"><i class="cb sc"></i><span class="slab">Iterations:</span><div class="spin w116 dimf"><span>0</span><svg class="ud"><use href="#updowndim"/></svg></div></div>
              <div class="srow tight"><i class="cb sc"></i><span class="slab">Smoothness:</span><div class="spin w116 dimf"><span>1,0</span><svg class="ud"><use href="#updowndim"/></svg></div></div>
            </fieldset>
            <fieldset class="grp gs"><legend>Separate By</legend>
              <div class="ln gl mt9"><i class="cb"></i><span>Smoothing Groups</span></div>
              <div class="ln gl mt11"><i class="cb"></i><span>Materials</span></div>
            </fieldset>
            <fieldset class="grp gu"><legend>Update Options</legend>
              <label class="rdline"><i class="ra on"></i>Always</label>
              <label class="rdline"><i class="ra"></i>When Rendering</label>
              <label class="rdline"><i class="ra"></i>Manually</label>
              <div class="row center mt6"><div class="btn w190 h36">Update</div></div>
            </fieldset>
          </div>
          <div class="roll rgeo">
            <div class="head h40"><i class="arr-d"></i><b>Edit Geometry</b><svg class="dg"><use href="#dotgrip"/></svg></div>
            <div class="geopad">
              <div class="btn w295 mt10">Repeat Last</div>
              <fieldset class="grp gc"><legend>Constraints</legend>
                <div class="cons"><label class="rd"><i class="ra on"></i>None</label><label class="rd"><i class="ra"></i>Edge</label><label class="rd"><i class="ra"></i>Face</label><label class="rd"><i class="ra"></i>Normal</label></div>
              </fieldset>
              <div class="pres"><i class="cb"></i><span class="w154">Preserve UVs</span><div class="btn w28 box h32"></div></div>
              <div class="row g10 mt11 h32r"><div class="btn w142">Create</div><div class="btn w142">Collapse</div></div>
              <div class="row g10 mt12 h30r"><div class="pair"><div class="btn w112">Attach</div><div class="btn w28 box"></div></div><div class="btn w142">Detach</div></div>
              <div class="slicegrp">
                <div class="row g10"><div class="btn w136">Slice Plane</div><div class="ln"><i class="cb"></i><span>Split</span></div></div>
                <div class="row g10"><div class="btn dis w136">Slice</div><div class="btn dis w137">Reset Plane</div></div>
                <div class="row g10"><div class="btn w136">QuickSlice</div><div class="btn w137">Cut</div></div>
              </div>
              <div class="row g10 mt10"><div class="pair"><div class="btn w112">MSmooth</div><div class="btn w28 box"></div></div><div class="pair"><div class="btn w113">Tessellate</div><div class="btn w28 box"></div></div></div>
              <div class="row g10 mt11"><div class="btn w169">Make Planar</div><div class="btn w31">X</div><div class="btn w31">Y</div><div class="btn w32">Z</div></div>
              <div class="row g10 mt11"><div class="btn w142">View Align</div><div class="btn w142">Grid Align</div></div>
              <div class="row mt11 relax"><div class="pair"><div class="btn w112">Relax</div><div class="btn w28 box"></div></div></div>
              <div class="row g10 mt11"><div class="btn w142">Hide Selected</div><div class="btn w142">Unhide All</div></div>
              <div class="row mt11 hideun"><div class="btn w181">Hide Unselected</div></div>
              <div class="named">Named Selections:</div>
            </div>
          </div>
        </div>
        <div class="scrollbar sb2"><i></i></div>
      </div>
    </div>
  </aside>
</main>

<section class="slider">
  <div class="vgrip tall"></div>
  <div class="sbtn">&lt;</div><div class="smain">0 / 100</div><div class="sbtn">&gt;</div>
</section>
<section class="track">
  <svg class="curveicon" viewBox="0 0 32 32"><path stroke="#ccc" stroke-width="3" stroke-dasharray="4 2" d="M2 1V32"/><path fill="none" stroke="#45bfbf" stroke-width="2" d="M10 24C16-6 18 0 22 18c2 10 6 10 9 2"/></svg>
  <div class="ruler">
    <i class="keymark"></i>
    <div class="labels"><span class="gold">0</span><span>5</span><span>10</span><span>15</span><span>20</span><span>25</span><span>30</span><span>35</span><span>40</span><span>45</span><span>50</span><span>55</span><span>60</span><span>65</span><span>70</span><span>75</span><span>80</span><span>85</span><span>90</span><span>95</span><span>100</span></div>
  </div>
</section>

<section class="status">
  <div class="listener">
    <div class="lpink"></div>
    <div class="lwhite">Mini</div>
    <div class="ltile"><svg class="ltlogo"><use href="#maxlogo"/></svg><svg class="ltx" viewBox="0 0 20 20"><path stroke="#777" stroke-width="1.5" d="M1 1 19 19M19 1 1 19"/></svg></div>
  </div>
  <div class="prompt"><span>1 Object Selected</span><span>Click or click-and-drag to select objects</span></div>
  <div class="coords">
    <div class="crow">
      <svg class="ci" viewBox="0 0 32 32"><path fill="none" stroke="#ccc" stroke-width="2" d="M1 7V1H7M25 1H31V7M1 25V31H7M25 31H31V25"/><rect x="9" y="6" width="14" height="20" fill="#45bfbf"/></svg>
      <svg class="ci" viewBox="0 0 32 32"><path fill="none" stroke="#ccc" stroke-width="3" d="M9 14V9c0-9 14-9 14 0v5"/><rect x="6" y="14" width="20" height="17" rx="1" fill="#ccc"/><path fill="#333" d="M14 19h4v9h-4z"/></svg>
      <svg class="ci" viewBox="0 0 32 32"><rect x="3" y="3" width="26" height="26" fill="none" stroke="#ccc" stroke-width="2"/><path stroke="#ccc" stroke-width="2" d="M16 3V29M3 16H29"/><circle cx="16" cy="16" r="5" fill="#444" stroke="#ccc" stroke-width="2"/></svg>
      <label class="xyz">X:</label><div class="cfield">37,751</div>
      <label class="xyz ym">Y:</label><div class="cfield">7,052</div>
      <label class="xyz zm">Z:</label><div class="cfield">0,0</div>
    </div>
    <div class="timetag"><svg viewBox="0 0 24 32"><path fill="none" stroke="#555" stroke-width="2" d="M12 2 22 8V24L12 30 2 24V8zM2 8 12 14 22 8M12 14V30"/></svg></div>
  </div>
  <div class="gridcol"><span>Grid = 10,0</span><span>Add Time Tag</span></div>
  <div class="playback">
    <div class="pbrow">
      <svg class="pb" viewBox="0 0 30 28"><path fill="#ccc" d="M1 2H4V26H1zM16 2V26L6 14zM29 2V26L18 14z"/></svg><i class="pbsep"></i>
      <svg class="pb" viewBox="0 0 30 28"><path fill="#ccc" d="M14 2V26L3 14zM17 2H21V26H17zM24 2H28V26H24z"/></svg>
      <svg class="pb play" viewBox="0 0 30 50"><path fill="#ccc" d="M3 2 28 25 3 48z"/></svg>
      <svg class="pb" viewBox="0 0 30 28"><path fill="#ccc" d="M2 2H6V26H2zM9 2H13V26H9zM16 2V26L27 14z"/></svg><i class="pbsep"></i>
      <svg class="pb" viewBox="0 0 30 28"><path fill="#ccc" d="M1 2V26L12 14zM14 2V26L25 14zM26 2H29V26H26z"/></svg>
    </div>
    <div class="pbrow2">
      <svg class="pb2" viewBox="0 0 28 28"><path fill="#ccc" d="M12 2V26L1 14zM16 2V26L27 14z"/></svg><i class="pbsep"></i>
      <div class="spin tfield"><span>0</span><svg class="ud"><use href="#updown"/></svg></div><i class="pbsep"></i>
      <svg class="pb2" viewBox="0 0 32 32"><circle cx="11" cy="13" r="11" fill="#ccc"/><path stroke="#333" stroke-width="2" d="M11 6V14H18"/><circle cx="21" cy="23" r="6" fill="none" stroke="#fdb415" stroke-width="4"/><circle cx="21" cy="23" r="9" fill="none" stroke="#fdb415" stroke-width="2" stroke-dasharray="3 3"/></svg>
    </div>
  </div>
  <div class="keybig"><svg viewBox="0 0 70 70"><path fill="#ddd" stroke="#555" d="M22 6H36V26H58V40H36V62H22V40H2V26H22z"/><g fill="none" stroke="#3aa6a6" stroke-width="6"><circle cx="42" cy="58" r="7"/><path d="M46 52 64 26M57 36l7 5M60 30l7 5"/></g></svg></div>
  <div class="autokey"><div class="kbtn">Auto</div><div class="kbtn">Set K.</div></div>
  <div class="keysel">
    <div class="tdrop selected"><span>Selected</span><i class="tri"></i></div>
    <div class="filtrow"><svg class="tang" viewBox="0 0 36 44"><path fill="none" stroke="#45bfbf" stroke-width="2.5" d="M3 44C10 30 9 10 18 6 27 10 26 30 33 44"/><path stroke="#ccc" stroke-width="2" d="M4 6H32"/><rect x="14" y="2" width="8" height="8" fill="#444" stroke="#ccc" stroke-width="2"/></svg><div class="kbtn fil">Filters...</div></div>
  </div>
  <div class="navgrid">
    <svg class="nv" viewBox="0 0 44 44"><circle cx="26" cy="16" r="12" fill="none" stroke="#ccc" stroke-width="4"/><path stroke="#ccc" stroke-width="6" d="M18 26 6 42"/></svg>
    <svg class="nv" viewBox="0 0 44 44"><path fill="#45bfbf" d="M14 1H27V15H14zM29 1H42V15H29zM29 17H42V32H29z"/><circle cx="15" cy="26" r="7" fill="none" stroke="#ccc" stroke-width="3"/><path stroke="#ccc" stroke-width="4" d="M10 32 3 42"/></svg>
    <svg class="nv" viewBox="0 0 44 44"><path fill="none" stroke="#ccc" stroke-width="2.5" d="M2 10V2H10M34 2H42V10M2 34V42H10M34 42H42V34"/><path fill="#45bfbf" d="M22 6 38 15V31L22 40 6 31V15z"/></svg>
    <svg class="nv" viewBox="0 0 44 44"><path fill="#45bfbf" d="M26 4 36 1 42 4V32L32 38 26 32z"/><path fill="#ccc" d="M12 22 22 18 24 38 16 42 4 30z"/></svg>
    <svg class="nv" viewBox="0 0 44 44"><rect x="3" y="3" width="36" height="30" fill="none" stroke="#ccc" stroke-width="3" stroke-dasharray="5 3"/><circle cx="21" cy="26" r="6" fill="none" stroke="#45bfbf" stroke-width="3"/><path stroke="#45bfbf" stroke-width="3" d="M17 32 10 42"/></svg>
    <svg class="nv" viewBox="0 0 44 44"><path fill="#ccc" d="M12 14V24L6 18C2 20 8 30 14 38 20 44 34 44 34 30V8c-4-2-5 0-5 8V4c-4-2-5 0-5 12V2c-4-2-5 0-5 14V5c-4-2-5 0-7 9z"/></svg>
    <svg class="nv" viewBox="0 0 44 44"><circle cx="22" cy="22" r="16" fill="#ccc"/><path fill="#45bfbf" d="M22 6A16 16 0 0 1 38 22H22z"/><path fill="none" stroke="#ccc" stroke-width="3" d="M2 34C10 32 34 14 42 8"/></svg>
    <svg class="nv" viewBox="0 0 44 44"><rect x="3" y="1" width="38" height="42" fill="#ccc"/><rect x="8" y="6" width="28" height="16" fill="#444"/><rect x="3" y="22" width="20" height="21" fill="#aaa" stroke="#333"/><path stroke="#45bfbf" stroke-width="3" d="M20 24 34 10"/></svg>
  </div>
</section>

<footer class="taskbar">
  <svg class="tb-win" viewBox="0 0 32 32"><path fill="#fff" d="M0 5 14 3V15H0zM16 3 32 0V15H16zM0 17H14V29L0 27zM16 17H32V32L16 29z"/></svg>
  <div class="searchbox">
    <svg class="cortana" viewBox="0 0 42 42"><circle cx="21" cy="21" r="17" fill="none" stroke="#e8e8e8" stroke-width="6"/></svg>
    <span class="stext">Scrivi qui per eseguire la ricerca</span>
    <svg class="mic" viewBox="0 0 24 32"><rect x="7" y="1" width="10" height="20" rx="5" fill="none" stroke="#999" stroke-width="2"/><path fill="none" stroke="#999" stroke-width="2" d="M3 14V17c0 10 18 10 18 0V14M12 26V31M6 31H18"/></svg>
  </div>
  <div class="tbi"><svg viewBox="0 0 40 32"><path fill="none" stroke="#fff" stroke-width="2" d="M9 2H31V30H9zM5 6H1V26H5M35 6H39V26H35"/></svg></div>
  <div class="tbi"><svg viewBox="0 0 40 44"><path fill="#0a78d7" d="M20 1C34 1 38 12 38 24H14c1 8 14 10 22 5v10C22 48 4 42 4 26 4 16 12 12 18 10 12 10 8 12 3 18 4 8 12 1 20 1zM14 18H27C27 10 15 10 14 18z"/></svg></div>
  <div class="tbi run"><svg viewBox="0 0 40 44"><path fill="#fde28a" d="M1 1H15L18 6H40V44H1z"/><path fill="#ffc83d" d="M1 1H15L17 6H1z"/><path fill="#2aa6e8" d="M10 24H30V44H24V32H16V44H10z"/></svg></div>
  <div class="tbi"><svg viewBox="0 0 40 44"><path fill="none" stroke="#fff" stroke-width="2" d="M12 12V8c0-10 16-10 16 0v4"/><rect x="1" y="11" width="38" height="33" fill="#fff"/><path fill="#f25022" d="M10 20h9v9h-9z"/><path fill="#7fba00" d="M21 20h9v9h-9z"/><path fill="#00a4ef" d="M10 31h9v9h-9z"/><path fill="#ffb900" d="M21 31h9v9h-9z"/></svg></div>
  <div class="tbi"><svg viewBox="0 0 44 44"><circle cx="22" cy="22" r="22" fill="#e2463a"/><path fill="#34a853" d="M22 44A22 22 0 0 1 3 11L14 30l8 14z"/><path fill="#fbc02d" d="M22 44 33 25 22 12H43A22 22 0 0 1 22 44z"/><circle cx="22" cy="22" r="10" fill="#fff"/><circle cx="22" cy="22" r="8" fill="#4a86e8"/></svg></div>
  <div class="tbi"><svg viewBox="0 0 40 40"><path fill="#fff" d="M20 0 40 14V40H0V14z"/><path fill="#01090d" d="M2 15H38L22 22 36 38 26 36 18 24z"/></svg></div>
  <div class="tbi tall act"><svg class="tbmax"><use href="#maxlogo"/></svg></div>
  <div class="tbi run"><svg viewBox="0 0 40 44"><rect x="1" y="1" width="38" height="42" fill="#fff"/><rect x="4" y="4" width="32" height="16" fill="#01090d"/><path fill="#01090d" d="M4 4H36V26L31 18 27 30 18 12 4 30z"/></svg></div>
  <div class="tray">
    <svg class="tr" viewBox="0 0 28 28"><path fill="none" stroke="#fff" stroke-width="2" d="M2 22 14 6 26 22"/></svg>
    <svg class="tr" viewBox="0 0 28 28"><path fill="none" stroke="#fff" stroke-width="2" d="M1 6H25V24H1zM26 11V19M7 10V20"/></svg>
    <svg class="tr" viewBox="0 0 28 36"><path fill="none" stroke="#fff" stroke-width="2" d="M4 1H26V22H4zM12 22V33M4 33H22M4 5H9V11H4z"/></svg>
    <svg class="tr" viewBox="0 0 34 34"><path fill="none" stroke="#fff" stroke-width="2" d="M2 13H6L14 5V29L6 21H2zM19 12c2 3 2 7 0 10M23 8c4 5 4 13 0 18M27 3c6 8 6 20 0 28"/></svg>
    <div class="clock"><span>21:38</span><span>04/12/17</span></div>
    <svg class="tr notif" viewBox="0 0 30 34"><path fill="none" stroke="#fff" stroke-width="2" d="M1 1H29V25H19L15 31 11 25H1z"/></svg>
  </div>
</footer>
</body>
</html>
```
FILE: styles.css
```css
* { box-sizing: border-box; }
html, body { margin: 0; padding: 0; }
body {
  width: 3360px; height: 2100px; overflow: hidden; background: #444;
  font-family: Roboto, "Liberation Sans", sans-serif; font-size: 21px; color: #e6e6e6;
  display: flex; flex-direction: column;
}
.defs { position: absolute; }
i { display: block; font-style: normal; }
fieldset { margin: 0; min-width: 0; }
label { display: flex; align-items: center; }

/* title */
.titlebar { height: 45px; flex: none; background: #fff; display: flex; align-items: center; color: #000; font-size: 24px; letter-spacing: 0.15px; border-bottom: 1px solid #555; }
.tlogo { width: 32px; height: 32px; margin: 0 6px 0 2px; }
.ttext { flex: 1; }
.winbtns { display: flex; gap: 72px; margin-right: 26px; }
.wb { width: 20px; height: 20px; }

/* menu */
.menubar { height: 43px; flex: none; display: flex; align-items: center; gap: 26px; padding: 0 0 3px 14px; font-size: 24px; letter-spacing: -0.36px; color: #f0f0f0; background: linear-gradient(#585858, #3e3e3e); border-bottom: 2px solid #111; }
.menubar u { text-underline-offset: 3px; }
.menuright { margin-left: auto; display: flex; align-items: center; height: 41px; margin-top: 3px; }
.user { width: 120px; height: 22px; background: #d2d2d2; color: #222; font-size: 14px; letter-spacing: 0; display: flex; align-items: center; padding: 0 4px; gap: 4px; margin-right: 40px; }
.user span { flex: 1; }
.usericon { width: 14px; height: 20px; }
.tri-dark { width: 0; height: 0; border: 5px solid transparent; border-top: 9px solid #111; border-bottom: 0; }
.wslabel { font-size: 21px; letter-spacing: -0.2px; color: #ddd; margin-right: 7px; }
.wsdrop { width: 268px; height: 40px; background: #5e5e5e; font-size: 21px; letter-spacing: -0.2px; color: #ddd; display: flex; align-items: center; justify-content: space-between; padding: 0 8px 0 12px; margin-right: 3px; }
.tri { width: 0; height: 0; border: 7px solid transparent; border-top: 12px solid #d8d8d8; border-bottom: 0; margin-top: -6px; }
.tri.small { border-width: 5px; border-top-width: 7px; }

/* toolbar */
.toolbar { height: 64px; flex: none; display: flex; align-items: center; padding-left: 16px; position: relative; background: #444; }
.vgrip { position: absolute; left: 6px; top: 6px; bottom: 6px; width: 3px; background: repeating-linear-gradient(#bbb 0 2px, transparent 2px 4px); }
.vgrip.tall { top: 6px; bottom: auto; height: 84px; }
.ti { width: 64px; height: 60px; flex: none; display: flex; align-items: center; justify-content: center; position: relative; border-radius: 6px; }
.ti svg { width: 46px; height: 46px; }
.ti.on { background: #5f8ac5; width: 62px; margin: 0 1px; }
.fly::after { content: ""; position: absolute; right: 3px; bottom: 0; width: 0; height: 0; border-left: 7px solid transparent; border-bottom: 8px solid #ddd; }
.sep { width: 13px; height: 44px; flex: none; position: relative; }
.sep::before { content: ""; position: absolute; left: 6px; top: 0; bottom: 0; width: 1px; background: #111; }
.sep.nar { width: 11px; }
.tdrop { height: 31px; margin-bottom: 22px; flex: none; background: #5e5e5e; font-size: 20px; letter-spacing: -0.2px; color: #ddd; display: flex; align-items: center; justify-content: space-between; padding: 0 11px 0 12px; }
.w138 { width: 138px; } .w238 { width: 238px; }

/* tabs */
.tabs { height: 42px; flex: none; background: #545454; border-top: 3px solid #666; border-bottom: 3px solid #2e2e2e; display: flex; align-items: flex-end; padding-left: 23px; color: #a8a8a8; font-size: 24px; letter-spacing: -0.1px; }
.tab { height: 33px; padding: 0 20px; display: flex; align-items: center; white-space: nowrap; }
.tab.active { background: #555; color: #e0e0e0; border: 2px solid #2e2e2e; border-bottom: 0; border-radius: 4px 4px 0 0; padding: 0 16px; margin: 0 2px; height: 36px; }
.tabmenu { display: flex; align-items: center; gap: 6px; margin-left: 44px; height: 33px; }
.tabmenu svg { width: 26px; height: 22px; }

/* ribbon */
.ribbon { height: 118px; flex: none; background: linear-gradient(#464646, #3a3a3a); display: flex; padding-left: 22px; gap: 4px; border-bottom: 2px solid #2e2e2e; }
.rb { width: 118px; height: 114px; margin-top: 2px; background: linear-gradient(#5e5e5e, #484848); display: flex; flex-direction: column; align-items: center; font-size: 24px; letter-spacing: -0.3px; color: #ddd; white-space: nowrap; }
.rbi { width: 80px; height: 80px; margin-top: 3px; flex: none; }
.rb span { margin-top: -1px; }

/* work area */
.work { height: 1506px; flex: none; display: flex; background: #444; }
.leftcol { width: 423px; flex: none; display: flex; flex-direction: column; }
.gripline { height: 21px; flex: none; display: flex; align-items: center; gap: 22px; padding: 2px 0 0 5px; }
.grip { height: 6px; background-image: radial-gradient(#bbb 0, #bbb 1px, transparent 1px); background-size: 3px 3px; }
.w70 { width: 65px; } .w318 { width: 318px; } .w804 { width: 804px; }
.leftbody { flex: 1; display: flex; min-height: 0; padding-bottom: 5px; }
.strip { width: 80px; flex: none; background: linear-gradient(90deg, #2c2c2c, #353535); border-right: 2px solid #000; display: flex; flex-direction: column; align-items: flex-start; padding: 1240px 0 0 5px; }
.playbtn { width: 36px; height: 36px; margin-left: 16px; background: #444; border-radius: 4px; display: flex; align-items: center; justify-content: center; }
.playbtn svg { width: 12px; height: 16px; }
.vpbtn { width: 70px; height: 80px; margin-top: 3px; border-radius: 10px; background: #4c4c4c; border: 2px solid #2a2a2a; display: flex; padding: 8px 6px; }
.vpbtn i { flex: 1; background: #555; border: 2px solid #2a2a2a; height: 52px; }
.vpbtn.vpon { background: #4e78b4; margin-top: 28px; }
.explorer { width: 333px; flex: none; display: flex; flex-direction: column; position: relative; }
.exmenu { display: flex; gap: 28px; padding: 15px 0 0 27px; height: 54px; font-family: "Noto Sans", sans-serif; font-size: 22.5px; color: #eee; }
.exsearch { display: flex; align-items: center; padding-left: 12px; gap: 11px; height: 38px; }
.exfield { width: 300px; height: 38px; border: 1px solid #5c5c5c; background: #464646; }
.chev { color: #2a2a66; font-size: 16px; font-weight: 700; letter-spacing: -2px; }
.exbody { flex: 1; display: flex; min-height: 0; margin-top: 8px; }
.extools { width: 45px; flex: none; padding: 2px 0 0 8px; display: flex; flex-direction: column; gap: 3px; }
.et { width: 35px; height: 36px; flex: none; display: flex; align-items: center; justify-content: center; }
.et svg { width: 34px; height: 34px; }
.et.b { background: #5f8ac5; }
.ethr { width: 31px; height: 1px; flex: none; margin: 1px 0 1px 2px; background: #777; }
.exlist { width: 288px; display: flex; flex-direction: column; border-left: 1px solid #3a3a3a; border-right: 1px solid #3a3a3a; overflow: hidden; font-family: "Noto Sans", sans-serif; font-size: 19.5px; }
.exhead { height: 29px; flex: none; display: flex; font-size: 20px; letter-spacing: -0.3px; white-space: nowrap; color: #eee; }
.excol1 { width: 257px; flex: none; border: 1px solid #5c5c5c; padding-left: 5px; display: flex; align-items: center; }
.excol2 { flex: 1; border: 1px solid #5c5c5c; padding-left: 5px; overflow: hidden; margin-left: 1px; }
.tri-up { width: 0; height: 0; border: 4px solid transparent; border-bottom: 5px solid #eee; border-top: 0; margin-left: 2px; }
.exrow { height: 34px; flex: none; display: flex; align-items: center; padding-left: 19px; margin-top: 0; }
.exhead + .exrow { margin-top: 3px; }
.eye { width: 30px; height: 16px; flex: none; }
.dot { width: 22px; height: 22px; background: #ccc; border-radius: 50%; margin-left: 5px; flex: none; }
.exname { width: 175px; height: 34px; margin-left: 6px; padding-left: 4px; flex: none; background: #4e4e4e; line-height: 32px; }
.excell { flex: 1; height: 34px; margin-left: 1px; background: #4e4e4e; }
.exrow.sel .exname, .exrow.sel .excell { background: #7c7c7c; }
.exspacer { flex: 1; }
.exscroll { height: 30px; flex: none; display: flex; margin-bottom: 11px; background: #e8e8e8; align-items: center; color: #111; }
.sarrow { width: 30px; text-align: center; font-size: 26px; line-height: 26px; background: #f0f0f0; }
.sthumb { flex: 1; height: 28px; background: #cdcdcd; }
.exfoot { height: 38px; flex: none; padding-left: 12px; margin-bottom: 5px; }
.wsbox { width: 289px; height: 38px; border: 1px solid #5c5c5c; color: #ffff20; font-size: 24px; letter-spacing: -0.2px; padding: 3px 0 0 2px; }

/* viewport */
.viewframe { width: 2114px; height: 1489px; margin-top: 13px; flex: none; display: flex; border: 2px solid #6f5f2a; background: #363636; padding-left: 5px; position: relative; }
.scene { width: 1448px; height: 1485px; flex: none; background: #8fb0d6; border-left: 1px solid #fff; border-right: 1px solid #fff; }
.vplabel { position: absolute; left: 6px; top: 5px; white-space: pre; font-family: "Noto Sans", sans-serif; font-size: 20.4px; line-height: 28px; color: #b6b6b6; text-shadow: 1px 1px 0 #3a3a3a; }
.vpdark { flex: 1; display: flex; justify-content: flex-end; padding: 13px 15px 0 0; }
.viewcube { width: 80px; height: 80px; }

/* command panel */
.cmd { flex: 1; display: flex; flex-direction: column; padding-left: 10px; min-width: 0; padding-top: 0; }
.cmd .gripline { padding-left: 4px; }
.cmdtabs { display: flex; height: 54px; margin-top: 8px; flex: none; padding: 0; gap: 0; }
.ct { width: 64px; background: #3e3e3e; border-radius: 8px 8px 0 0; border-right: 1px solid #333; display: flex; align-items: center; justify-content: center; }
.ct svg { width: 36px; height: 36px; }
.ct.act { background: #4a4a4a; }
.cmdbody { height: 1418px; flex: none; display: flex; border: 1px solid #333; border-radius: 4px; border-right: 0; overflow: hidden; }
.modcol { width: 405px; flex: none; padding-left: 5px; display: flex; flex-direction: column; }
.namerow { display: flex; gap: 11px; margin-top: 14px; }
.namefield { width: 354px; height: 37px; background: #5e5e5e; padding-left: 4px; line-height: 35px; font-size: 20px; color: #ddd; }
.swatch { width: 32px; height: 37px; background: linear-gradient(#000 50%, #fff 50%); }
.modlist { width: 399px; height: 31px; margin-top: 19px; background: #5e5e5e; display: flex; align-items: center; justify-content: space-between; padding: 0 14px 0 4px; font-size: 20px; color: #ddd; }
.btn { height: 33px; background: #5e5e5e; border-radius: 6px; display: flex; align-items: center; justify-content: center; font-size: 21px; color: #d4d4d4; flex: none; white-space: nowrap; box-shadow: inset 0 0 0 1px #555; }
.btn.dis { color: #8a8a8a; background: #555; }
.modbtns { display: grid; grid-template-columns: 193px 193px; gap: 8px 6px; margin: 28px 0 0 3px; }
.modbtns .btn { height: 36px; }
.stack { width: 399px; height: 126px; margin-top: 12px; border: 2px solid #f0f0f0; background: #434343; flex: none; }
.stackrow { display: flex; height: 32px; border-bottom: 1px solid #666; align-items: center; }
.stackarrow { width: 0; height: 0; border: 7px solid transparent; border-left: 8px solid #ccc; border-right: 0; margin: 0 14px 0 14px; }
.stackname { flex: 1; height: 32px; border: 1px solid #6f93c4; line-height: 29px; padding-left: 1px; font-size: 21px; }
.stacktools { display: flex; align-items: center; height: 30px; margin-top: 14px; padding-left: 12px; gap: 14px; flex: none; }
.st { width: 30px; height: 30px; flex: none; }
.stsep { width: 1px; height: 20px; background: #999; }
.splitter { display: flex; gap: 8px; align-items: center; height: 2px; margin: 29px 0 10px 11px; flex: none; }
.splitter i { width: 167px; height: 2px; background: #666; }
.splitter b { width: 26px; height: 5px; background-image: radial-gradient(#bbb 0, #bbb 1px, transparent 1px); background-size: 3px 3px; }
.rollscroll { flex: 1; display: flex; min-height: 0; }
.rolls { width: 384px; flex: none; display: flex; flex-direction: column; gap: 7px; }
.roll { background: #4f4f4f; border-radius: 4px; border-bottom: 1px solid #3a3a3a; flex: none; }
.r404 { height: 404px; } .r39 { height: 39px; } .r424 { height: 424px; } .r20 { height: 20px; }
.scrollbar { width: 12px; border-radius: 6px; background: #3a3a3a; margin-left: 4px; flex: none; padding-top: 30px; }
.scrollbar i { height: 100%; border-radius: 6px; background: #555; }
.sb2 { height: 1415px; margin-left: 7px; padding-top: 540px; margin-top: 2px; }
.sb1 { height: 892px; }
.subobj { display: flex; height: 31px; padding-left: 66px; overflow: hidden; }
.so { width: 43px; background: #454545; display: flex; align-items: flex-start; justify-content: center; }
.so svg { width: 40px; height: 30px; margin-top: -6px; flex: none; }
.so.on { background: #5f8ac5; border-radius: 0 0 4px 4px; }
.subobj::after { content: ""; width: 103px; background: #454545; }
.ln { display: flex; align-items: center; gap: 6px; font-size: 21px; }
.ln > span { white-space: nowrap; }
.dim { color: #8a8a8a; }
.cb { width: 23px; height: 24px; background: #5e5e5e; border: 1px solid #474747; flex: none; position: relative; }
.cb.ck::after { content: ""; position: absolute; left: 7px; top: 2px; width: 7px; height: 14px; border: solid #ddd; border-width: 0 3px 3px 0; transform: rotate(40deg); }
.pl47 { padding-left: 47px; } .pl45 { padding-left: 45px; } .pl51 { padding-left: 51px; }
.mt6 { margin-top: 6px; } .mt8 { margin-top: 8px; } .mt9 { margin-top: 9px; } .mt10 { margin-top: 10px; } .mt11 { margin-top: 11px; } .mt12 { margin-top: 12px; } .mt13 { margin-top: 13px; } .mt15 { margin-top: 15px; } .mt21 { margin-top: 21px; }
.h29 { height: 29px; }
.wlab { width: 109px; }
.spin { height: 30px; background: #5e5e5e; display: flex; align-items: center; justify-content: space-between; padding: 0 11px 0 3px; flex: none; font-size: 20px; color: #ddd; }
.dim .spin { background: #585858; color: #8a8a8a; }
.dimf { background: #555; color: #8a8a8a; }
.ud { width: 12px; height: 24px; flex: none; margin-left: auto; }
.w155 { width: 155px; } .w143 { width: 143px; } .w116 { width: 116px; }
.row { display: flex; flex: none; align-items: center; }
.g14 { gap: 14px; } .g11 { gap: 11px; } .g10 { gap: 10px; } .g8 { gap: 8px; } .g6 { gap: 6px; }
.pair { display: flex; gap: 2px; flex: none; }
.w142 { width: 142px; } .w112 { width: 112px; } .w115 { width: 115px; } .w113 { width: 113px; } .w22 { width: 22px; } .w28 { width: 28px; } .w295 { width: 295px; } .w190 { width: 190px; } .w136 { width: 136px; } .w137 { width: 137px; } .w169 { width: 169px; } .w31 { width: 31px; } .w32 { width: 32px; } .w181 { width: 181px; } .w100 { width: 100px; } .w124 { width: 124px; } .w170 { width: 170px; } .w154 { width: 154px; }
.btn.sq .ud { margin: 0; width: 10px; height: 22px; }
.box { position: relative; }
.box::before { content: ""; width: 12px; height: 10px; background: #999; border: 1px solid #000; border-top-width: 3px; }
.h36 { height: 36px; }
.h32 { height: 32px; }
.center { justify-content: center; }
.grp { border: 2px solid #333; border-radius: 5px; padding: 0; }
.grp legend { padding: 0 1px; margin-left: 9px; height: 24px; line-height: 24px; font-size: 21px; color: #e6e6e6; }
.gpv { width: 316px; height: 74px; margin: 11px 0 0 30px; }
.radios { display: flex; padding: 9px 0 0 2px; }
.rd { font-size: 21px; gap: 11px; }
.ra { width: 24px; height: 24px; border-radius: 50%; background: #5e5e5e; position: relative; flex: none; }
.ra.on::after { content: ""; position: absolute; left: 5px; top: 5px; width: 14px; height: 14px; border-radius: 50%; background: #e8e8e8; }
.vsel { text-align: right; padding-right: 53px; margin-top: 13px; font-size: 21px; height: 24px; line-height: 24px; }
.head { display: flex; align-items: center; font-size: 22.5px; }
.h40 { height: 40px; }
.head b { flex: 1; color: #eee; font-weight: 700; }
.arr-r { width: 0; height: 0; border: 7px solid transparent; border-left: 10px solid #aaa; border-right: 0; margin: 0 14px 0 14px; }
.arr-d { width: 14px; height: 0; border: 7px solid transparent; border-top: 10px solid #aaa; border-bottom: 0; margin: 0 14px 0 12px; }
.dg { width: 12px; height: 12px; margin-right: 15px; }
.evrows { padding: 12px 0 0 42px; display: flex; flex-direction: column; gap: 10.5px; }
.evrows .row { width: 295px; }
.wgroup { width: 302px; height: 93px; margin: 14px 0 0 38px; border: 2px solid #333; border-radius: 4px; padding-top: 12px; display: flex; flex-direction: column; gap: 8px; }
.wrow { display: flex; align-items: center; height: 29px; padding-left: 29px; font-size: 21px; }
.wname { width: 87px; }
.wrow .spin { height: 29px; }

/* geometry column */
.geocol { flex: 1; display: flex; min-width: 0; }
.geoinner { width: 385px; flex: none; display: flex; flex-direction: column; gap: 8px; padding-top: 1px; overflow: hidden; }
.r628 { height: 628px; padding-top: 0; }
.sw { width: 31px; height: 29px; border: 2px solid #000; flex: none; }
.yel { background: #ffc800; } .pale { background: #e4e48c; margin-left: 7px; }
.gd, .gr, .gs, .gu { width: 301px; margin-left: 40px; }
.gd { height: 104px; } .gr { height: 106px; margin-top: 3px; } .gs { height: 104px; margin-top: 3px; } .gu { height: 181px; margin-top: 2px; }
.srow { display: flex; align-items: center; height: 30px; margin-bottom: 10px; font-size: 21px; }
.srow.tight { margin-bottom: 9px; }
.slab { width: 167px; text-align: right; padding-right: 7px; white-space: nowrap; margin-left: 7px; }
.sc { margin-left: 9px; margin-right: -25px; }
.gl { padding-left: 9px; }
.rdline { height: 32px; font-size: 21px; gap: 14px; padding-left: 11px; }
.rgeo { height: 800px; }
.geopad { padding-left: 43px; }
.gc { width: 301px; height: 105px; margin: 3px 0 0 -3px; }
.cons { display: grid; grid-template-columns: 120px 120px; row-gap: 10px; padding: 9px 0 0 17px; }
.pres { display: flex; align-items: center; gap: 6px; margin: 14px 0 0 20px; font-size: 21px; height: 32px; }
.h32r .btn { height: 32px; }
.h30r .btn { height: 30px; border-radius: 6px 6px 0 0; }
.slicegrp { width: 301px; height: 139px; margin: 13px 0 0 -3px; border: 2px solid #333; border-radius: 4px; padding: 8px 0 0 7px; display: flex; flex-direction: column; gap: 11px; }
.slicegrp .btn { height: 32px; }
.relax { padding-left: 75px; }
.hideun { padding-left: 57px; }
.named { margin: 7px 0 0 5px; font-size: 21px; height: 24px; color: #eee; }

/* time slider */
.slider { height: 46px; flex: none; display: flex; gap: 2px; padding: 5px 0 0 18px; position: relative; background: #444; color: #ccc; font-size: 22px; }
.sbtn { width: 30px; height: 34px; background: #5e5e5e; border-radius: 6px; display: flex; align-items: center; justify-content: center; }
.smain { width: 247px; height: 34px; background: #5e5e5e; border-radius: 6px; display: flex; align-items: center; justify-content: center; }
.track { height: 50px; flex: none; display: flex; border-top: 2px solid #111; margin-left: 17px; }
.curveicon { width: 32px; height: 32px; margin: 8px 0 0 28px; flex: none; }
.ruler { width: 3142px; margin-left: 41px; flex: none; position: relative; background-color: #2a2a2a;
  background-image: linear-gradient(90deg, #888 1px, transparent 1px), linear-gradient(90deg, #666 1px, transparent 1px);
  background-size: 155.7px 26px, 31.14px 22px; background-position: 13px 0, 13px 0; background-repeat: repeat-x; }
.keymark { position: absolute; left: 5px; top: 0; bottom: 0; width: 17px; background: #7a7428; }
.labels { display: flex; margin-left: -65px; height: 100%; padding-top: 20px; font-size: 24px; color: #aaa; position: relative; letter-spacing: -0.5px; }
.labels span { width: 155.7px; flex: none; text-align: center; }
.labels .gold { color: #d8cc70; }

/* status */
.status { height: 106px; flex: none; display: flex; background: #444; }
.listener { width: 206px; flex: none; position: relative; padding: 5px 0 0 4px; display: flex; flex-direction: column; gap: 2px; }
.lpink { width: 197px; height: 46px; background: #dbc4c4; border: 1px solid #999; flex: none; }
.lwhite { width: 197px; height: 48px; background: #fff; color: #999; font-family: "Liberation Mono", monospace; font-size: 22px; text-align: right; padding: 4px 3px 0 0; flex: none; }
.ltile { position: absolute; left: 13px; top: 56px; width: 134px; height: 50px; background: #fff; display: flex; align-items: center; padding-left: 13px; gap: 32px; border: 1px solid #ccc; border-bottom: 0; }
.ltlogo { width: 32px; height: 32px; }
.ltx { width: 20px; height: 20px; }
.prompt { width: 1384px; flex: none; display: flex; flex-direction: column; padding: 19px 0 0 7px; gap: 27px; font-size: 21px; letter-spacing: -0.1px; color: #eee; line-height: 24px; }
.coords { width: 655px; flex: none; display: flex; flex-direction: column; align-items: flex-end; padding-top: 12px; }
.crow { display: flex; align-items: center; height: 36px; width: 100%; padding-left: 2px; }
.ci { width: 32px; height: 32px; margin-right: 22px; flex: none; }
.xyz { width: 24px; margin-left: -10px; font-size: 21px; color: #fff; margin-right: 4px; }
.xyz.ym { margin-left: 20px; } .xyz.zm { margin-left: 26px; }
.cfield { width: 117px; height: 36px; background: #585858; border: 1px solid #333; color: #8a8a8a; font-size: 21px; padding-left: 4px; line-height: 32px; letter-spacing: -0.4px; }
.timetag { width: 43px; height: 43px; margin-top: 11px; background: #2dfbf8; border-radius: 6px 0 0 6px; display: flex; align-items: center; justify-content: center; }
.timetag svg { width: 24px; height: 32px; }
.gridcol { width: 210px; flex: none; display: flex; flex-direction: column; gap: 27px; padding: 19px 0 0 9px; font-size: 21px; letter-spacing: -0.1px; line-height: 24px; color: #eee; }
.playback { width: 267px; flex: none; display: flex; flex-direction: column; padding-top: 7px; }
.pbrow { display: flex; align-items: center; height: 46px; gap: 11px; padding-left: 16px; }
.pb { width: 30px; height: 28px; flex: none; }
.pb.play { height: 46px; margin: 0 5px; }
.pbsep { width: 1px; height: 34px; background: #111; flex: none; }
.pbrow2 { display: flex; align-items: center; gap: 3px; height: 36px; margin-top: 2px; padding-left: 18px; }
.pb2 { width: 28px; height: 28px; flex: none; }
.pbrow2 .pb2:first-child { margin-right: 12px; }
.tfield { width: 139px; height: 34px; }
.keybig { width: 86px; height: 92px; margin-top: 7px; flex: none; background: #5e5e5e; border-radius: 8px; display: flex; align-items: center; justify-content: center; }
.keybig svg { width: 62px; height: 62px; }
.autokey { width: 93px; margin: 7px 0 0 5px; flex: none; display: flex; flex-direction: column; gap: 2px; }
.kbtn { height: 42px; background: #5e5e5e; border-radius: 8px; display: flex; align-items: center; justify-content: center; font-size: 21px; letter-spacing: -0.3px; color: #ccc; }
.keysel { width: 228px; margin: 7px 0 0 6px; flex: none; display: flex; flex-direction: column; }
.tdrop.selected { width: 228px; margin: 0; }
.filtrow { display: flex; align-items: flex-start; margin-top: 14px; gap: 12px; }
.tang { width: 36px; height: 44px; flex: none; }
.fil { flex: 1; }
.navgrid { margin: 13px 0 0 24px; display: grid; grid-template-columns: repeat(4, 46px); grid-auto-rows: 45px; gap: 0; }
.nv { width: 36px; height: 38px; }

/* taskbar */
.taskbar { height: 80px; flex: none; background: #01090d; display: flex; align-items: center; position: relative; }
.tb-win { width: 33px; height: 32px; margin: 0 31px 0 32px; flex: none; }
.searchbox { width: 689px; height: 80px; background: #333; display: flex; align-items: center; flex: none; padding-left: 19px; }
.cortana { width: 42px; height: 44px; flex: none; }
.stext { margin-left: 19px; color: #a8a8a8; font-size: 26px; letter-spacing: -0.2px; flex: 1; }
.mic { width: 24px; height: 32px; margin-right: 30px; }
.tbi { width: 98px; height: 80px; flex: none; display: flex; align-items: center; justify-content: center; }
.tbi svg { width: 42px; height: 42px; }
.tbi.run { box-shadow: inset 0 -4px 0 #76b9ed, inset 9px 0 0 #01090d, inset -9px 0 0 #01090d; }
.tbi.act { background: #333c40; box-shadow: inset 0 -4px 0 #76b9ed; }
.tbi.tall svg.tbmax { width: 48px; height: 48px; }
.tray { margin-left: auto; display: flex; align-items: center; gap: 20px; padding-right: 50px; }
.tr { width: 28px; height: 32px; flex: none; }
.clock { display: flex; flex-direction: column; align-items: center; gap: 6px; width: 100px; font-size: 24px; color: #f0f0f0; line-height: 30px; margin: 0 0 0 4px; }
.notif { margin-left: 21px; }
```
